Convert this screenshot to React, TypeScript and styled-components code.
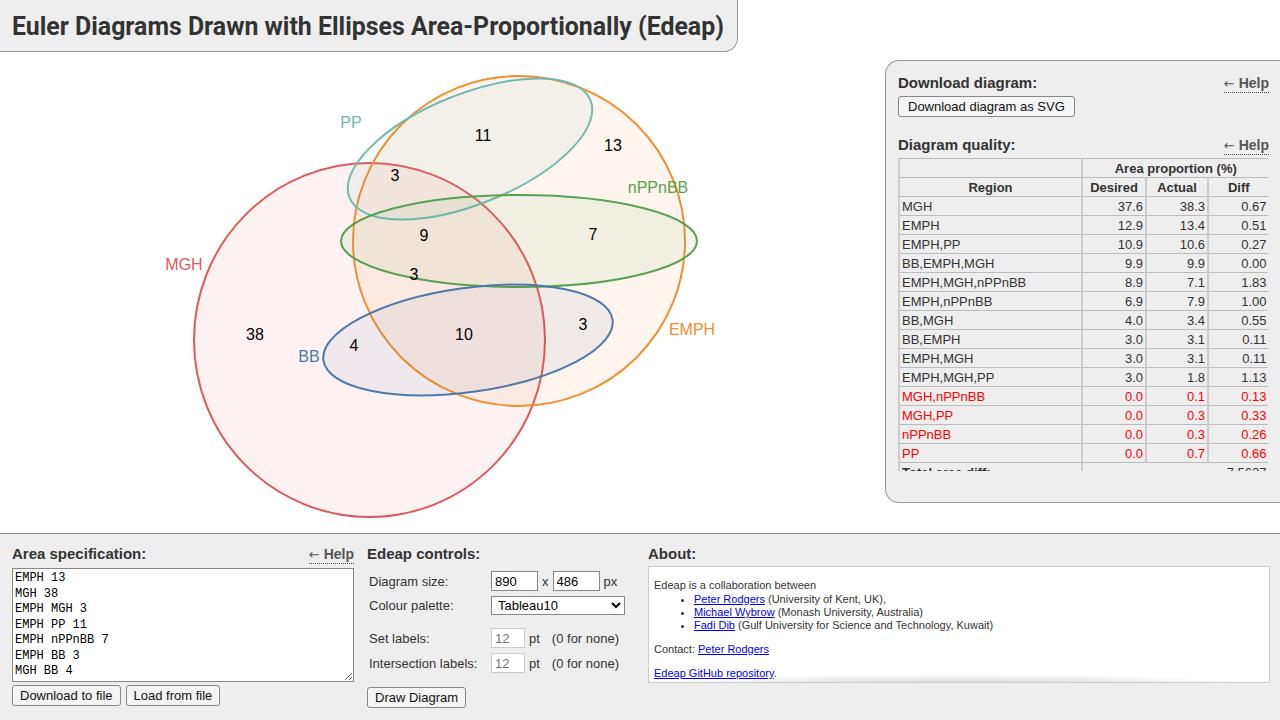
import React, { FC } from 'react';
import styled, { createGlobalStyle } from 'styled-components';

const GlobalStyle = createGlobalStyle`
    html, body {
        margin: 0;
        padding: 0;
        background: #fff;
        font-family: "Liberation Sans", Arial, sans-serif;
        color: #222;
    }
`;

const Page = styled.div`
    width: 1280px;
    height: 720px;
    overflow: hidden;
    display: flex;
    flex-direction: column;
`;

const Top = styled.div`
    height: 533px;
    display: grid;
    grid-template-columns: 885px 1fr;
`;

const LeftCol = styled.div`
    display: flex;
    flex-direction: column;
`;

const TitleTab = styled.div`
    align-self: flex-start;
    height: 52px;
    box-sizing: border-box;
    padding: 0 13px 0 12px;
    display: flex;
    align-items: center;
    background: #eee;
    border-right: 1px solid #999;
    border-bottom: 1px solid #999;
    border-bottom-right-radius: 14px;
`;

const Title = styled.h1`
    margin: 0;
    padding-top: 2px;
    font-family: Roboto, "Liberation Sans", sans-serif;
    font-size: 24.9px;
    font-weight: 700;
    color: #333;
`;

const RightCol = styled.div`
    padding-top: 60px;
`;

const SidePanel = styled.div`
    height: 443px;
    box-sizing: border-box;
    background: #eee;
    border: 1px solid #999;
    border-right: none;
    border-radius: 14px 0 0 14px;
    padding: 13px 12px 0 12px;
    width: 396px;
`;

const SectionHead = styled.div<{ $gap?: number }>`
    display: flex;
    justify-content: space-between;
    align-items: baseline;
    margin-top: ${(p) => p.$gap ?? 0}px;
    margin-bottom: 3px;
`;

const Heading = styled.span`
    font-size: 15px;
    font-weight: 700;
    color: #333;
`;

const Help = styled.a`
    font-size: 14px;
    font-weight: 700;
    color: #555;
    text-decoration: none;
    border-bottom: 1px dotted #444;
    line-height: 16px;
`;

const Arrow = styled.span`
    font-family: "DejaVu Sans", sans-serif;
    font-weight: 400;
    font-size: 13px;
`;

const Button = styled.button<{ $pad?: number }>`
    font-family: "Liberation Sans", Arial, sans-serif;
    font-size: 13px;
    color: #111;
    background: #f4f4f4;
    border: 1px solid #888;
    border-radius: 3px;
    height: 21px;
    padding: 0 ${(p) => p.$pad ?? 7}px;
`;

const TableWrap = styled.div`
    height: 313px;
    overflow: hidden;
    width: 370px;
`;

const Table = styled.table`
    border-collapse: collapse;
    table-layout: fixed;
    width: 370px;
    font-size: 13px;
    color: #333;
`;

const Th = styled.th`
    font-weight: 700;
    height: 18px;
    padding: 0 2px;
    border: 1px solid #bbb;
    border-left-width: 2px;
    border-left-color: #ccc;
    text-align: center;
    line-height: 17px;
`;

const Td = styled.td<{ $num?: boolean; $red?: boolean }>`
    height: 18px;
    padding: 0 2px;
    line-height: 17px;
    border: 1px solid #bbb;
    border-left-width: 2px;
    border-left-color: #ccc;
    text-align: ${(p) => (p.$num ? 'right' : 'left')};
    color: ${(p) => (p.$red ? '#f00' : '#333')};
    white-space: nowrap;
`;

const Bottom = styled.div`
    flex: 1;
    background: #eee;
    border-top: 1px solid #888;
    display: grid;
    grid-template-columns: 342px 268px 622px;
    column-gap: 13px;
    padding: 11px 0 0 12px;
`;

const Column = styled.div`
    display: flex;
    flex-direction: column;
`;

const SpecArea = styled.textarea`
    box-sizing: border-box;
    width: 342px;
    height: 114px;
    margin: 1px 0 0 0;
    padding: 2px 2px 0 2px;
    font-family: "Liberation Mono", "Courier New", monospace;
    font-size: 12px;
    font-weight: 400;
    line-height: 15.5px;
    color: #000;
    border: 1px solid #888;
    resize: vertical;
    overflow: hidden;
`;

const ButtonRow = styled.div`
    display: flex;
    gap: 5px;
    margin-top: 3px;
`;

const ControlGrid = styled.div`
    display: grid;
    grid-template-columns: 122px auto;
    row-gap: 5px;
    align-items: center;
    font-size: 13px;
    color: #333;
    padding-left: 2px;
    margin-top: 6px;
`;

const Spacer = styled.div`
    grid-column: span 2;
    height: 3px;
`;

const Inline = styled.div`
    display: flex;
    align-items: center;
    gap: 4px;
`;

const NumInput = styled.input<{ $w: number; $muted?: boolean }>`
    box-sizing: border-box;
    width: ${(p) => p.$w}px;
    height: 20px;
    font-family: "Liberation Sans", Arial, sans-serif;
    font-size: 13px;
    padding: 0 3px;
    color: ${(p) => (p.$muted ? '#999' : '#000')};
    border: 1px solid ${(p) => (p.$muted ? '#ccc' : '#888')};
    background: #fff;
`;

const Note = styled.span`
    margin-left: 8px;
`;

const Select = styled.select`
    width: 134px;
    height: 19px;
    font-family: "Liberation Sans", Arial, sans-serif;
    font-size: 13px;
    border: 1px solid #888;
    background: #fff;
    color: #000;
    padding: 0 2px;
`;

const DrawRow = styled.div`
    margin-top: 14px;
`;

const AboutBox = styled.div`
    box-sizing: border-box;
    height: 117px;
    width: 622px;
    margin-top: 1px;
    background: #fff;
    border: 1px solid #ccc;
    padding: 12px 5px 0 5px;
    font-size: 11px;
    line-height: 13px;
    color: #333;
    overflow: hidden;
    position: relative;
    &::after {
        content: '';
        position: absolute;
        left: 20px;
        right: 20px;
        bottom: -12px;
        height: 20px;
        background: radial-gradient(ellipse at center, rgba(0, 0, 0, 0.18), rgba(0, 0, 0, 0) 70%);
    }
`;

const Para = styled.p<{ $after?: number }>`
    margin: 0 0 ${(p) => p.$after ?? 0}px 0;
`;

const List = styled.ul`
    margin: 1px 0 11px 0;
    padding-left: 40px;
`;

const Link = styled.a`
    color: #00e;
    text-decoration: underline;
`;

type Row = [string, string, string, string, boolean?];

const rows: Row[] = [
    ['MGH', '37.6', '38.3', '0.67'],
    ['EMPH', '12.9', '13.4', '0.51'],
    ['EMPH,PP', '10.9', '10.6', '0.27'],
    ['BB,EMPH,MGH', '9.9', '9.9', '0.00'],
    ['EMPH,MGH,nPPnBB', '8.9', '7.1', '1.83'],
    ['EMPH,nPPnBB', '6.9', '7.9', '1.00'],
    ['BB,MGH', '4.0', '3.4', '0.55'],
    ['BB,EMPH', '3.0', '3.1', '0.11'],
    ['EMPH,MGH', '3.0', '3.1', '0.11'],
    ['EMPH,MGH,PP', '3.0', '1.8', '1.13'],
    ['MGH,nPPnBB', '0.0', '0.1', '0.13', true],
    ['MGH,PP', '0.0', '0.3', '0.33', true],
    ['nPPnBB', '0.0', '0.3', '0.26', true],
    ['PP', '0.0', '0.7', '0.66', true],
];

type Shape = { name: string; color: string; cx: number; cy: number; rx: number; ry: number; rot: number };

const shapes: Shape[] = [
    { name: 'MGH', color: '#e15759', cx: 369.5, cy: 340, rx: 175.5, ry: 177, rot: 0 },
    { name: 'EMPH', color: '#f28e2b', cx: 519, cy: 241, rx: 166, ry: 165, rot: 0 },
    { name: 'PP', color: '#76b7b2', cx: 470, cy: 149, rx: 130, ry: 55, rot: -22 },
    { name: 'nPPnBB', color: '#59a14f', cx: 519, cy: 241, rx: 178, ry: 46, rot: 0 },
    { name: 'BB', color: '#4e79a7', cx: 468, cy: 340, rx: 146, ry: 52, rot: -8 },
];

const setLabels = [
    { t: 'PP', x: 351, y: 128, c: '#76b7b2' },
    { t: 'MGH', x: 184, y: 270, c: '#e15759' },
    { t: 'nPPnBB', x: 658, y: 193, c: '#59a14f' },
    { t: 'EMPH', x: 692, y: 335, c: '#f28e2b' },
    { t: 'BB', x: 309, y: 362, c: '#4e79a7' },
];

const zoneLabels = [
    { t: '11', x: 483, y: 141 },
    { t: '13', x: 613, y: 151 },
    { t: '3', x: 395, y: 181 },
    { t: '9', x: 424, y: 241 },
    { t: '7', x: 593, y: 240 },
    { t: '3', x: 414, y: 280 },
    { t: '38', x: 255, y: 340 },
    { t: '4', x: 354, y: 351 },
    { t: '10', x: 464, y: 340 },
    { t: '3', x: 583, y: 330 },
];

const Diagram: FC = () => (
    <svg width={885} height={481} viewBox="0 52 885 481">
        {shapes.map((s) => (
            <ellipse
                key={s.name}
                cx={s.cx}
                cy={s.cy}
                rx={s.rx}
                ry={s.ry}
                transform={`rotate(${s.rot} ${s.cx} ${s.cy})`}
                fill={s.color}
                fillOpacity={0.08}
                stroke={s.color}
                strokeWidth={2}
            />
        ))}
        {setLabels.map((l) => (
            <text key={l.t} x={l.x} y={l.y} fill={l.c} fontSize={16} textAnchor="middle" fontFamily="Liberation Sans, Arial, sans-serif">
                {l.t}
            </text>
        ))}
        {zoneLabels.map((l, i) => (
            <text key={i} x={l.x} y={l.y} fill="#000" fontSize={16} textAnchor="middle" fontFamily="Liberation Sans, Arial, sans-serif">
                {l.t}
            </text>
        ))}
    </svg>
);

const spec = [
    'EMPH 13',
    'MGH 38',
    'EMPH MGH 3',
    'EMPH PP 11',
    'EMPH nPPnBB 7',
    'EMPH BB 3',
    'MGH BB 4',
    'EMPH MGH BB 10',
    'EMPH MGH nPPnBB 9',
    'EMPH MGH PP 3',
].join('\n');

const HelpLink: FC = () => (
    <Help>
        <Arrow>←</Arrow> Help
    </Help>
);

const App: FC = () => (
    <Page>
        <GlobalStyle />
        <Top>
            <LeftCol>
                <TitleTab>
                    <Title>Euler Diagrams Drawn with Ellipses Area-Proportionally (Edeap)</Title>
                </TitleTab>
                <Diagram />
            </LeftCol>
            <RightCol>
                <SidePanel>
                    <SectionHead>
                        <Heading>Download diagram:</Heading>
                        <HelpLink />
                    </SectionHead>
                    <Button $pad={9}>Download diagram as SVG</Button>
                    <SectionHead $gap={19}>
                        <Heading>Diagram quality:</Heading>
                        <HelpLink />
                    </SectionHead>
                    <TableWrap>
                        <Table>
                            <colgroup>
                                <col style={{ width: 183 }} />
                                <col style={{ width: 64 }} />
                                <col style={{ width: 62 }} />
                                <col style={{ width: 61 }} />
                            </colgroup>
                            <thead>
                                <tr>
                                    <Th />
                                    <Th colSpan={3}>Area proportion (%)</Th>
                                </tr>
                                <tr>
                                    <Th>Region</Th>
                                    <Th>Desired</Th>
                                    <Th>Actual</Th>
                                    <Th>Diff</Th>
                                </tr>
                            </thead>
                            <tbody>
                                {rows.map(([r, d, a, f, red]) => (
                                    <tr key={r}>
                                        <Td $red={red}>{r}</Td>
                                        <Td $num $red={red}>{d}</Td>
                                        <Td $num $red={red}>{a}</Td>
                                        <Td $num $red={red}>{f}</Td>
                                    </tr>
                                ))}
                                <tr>
                                    <Td>
                                        <b>Total area diff:</b>
                                    </Td>
                                    <Td $num colSpan={3}>
                                        7.5637
                                    </Td>
                                </tr>
                            </tbody>
                        </Table>
                    </TableWrap>
                </SidePanel>
            </RightCol>
        </Top>
        <Bottom>
            <Column>
                <SectionHead>
                    <Heading>Area specification:</Heading>
                    <HelpLink />
                </SectionHead>
                <SpecArea defaultValue={spec} spellCheck={false} />
                <ButtonRow>
                    <Button>Download to file</Button>
                    <Button>Load from file</Button>
                </ButtonRow>
            </Column>
            <Column>
                <SectionHead>
                    <Heading>Edeap controls:</Heading>
                </SectionHead>
                <ControlGrid>
                    <span>Diagram size:</span>
                    <Inline>
                        <NumInput $w={47} defaultValue="890" />
                        <span>x</span>
                        <NumInput $w={47} defaultValue="486" />
                        <span>px</span>
                    </Inline>
                    <span>Colour palette:</span>
                    <Select defaultValue="Tableau10">
                        <option>Tableau10</option>
                        <option>Tableau20</option>
                    </Select>
                    <Spacer />
                    <span>Set labels:</span>
                    <Inline>
                        <NumInput $w={34} $muted placeholder="12" />
                        <span>pt</span>
                        <Note>(0 for none)</Note>
                    </Inline>
                    <span>Intersection labels:</span>
                    <Inline>
                        <NumInput $w={34} $muted placeholder="12" />
                        <span>pt</span>
                        <Note>(0 for none)</Note>
                    </Inline>
                </ControlGrid>
                <DrawRow>
                    <Button>Draw Diagram</Button>
                </DrawRow>
            </Column>
            <Column>
                <SectionHead>
                    <Heading>About:</Heading>
                </SectionHead>
                <AboutBox>
                    <Para>Edeap is a collaboration between</Para>
                    <List>
                        <li>
                            <Link href="#">Peter Rodgers</Link> (University of Kent, UK),
                        </li>
                        <li>
                            <Link href="#">Michael Wybrow</Link> (Monash University, Australia)
                        </li>
                        <li>
                            <Link href="#">Fadi Dib</Link> (Gulf University for Science and Technology, Kuwait)
                        </li>
                    </List>
                    <Para $after={11}>
                        Contact: <Link href="#">Peter Rodgers</Link>
                    </Para>
                    <Para>
                        <Link href="#">Edeap GitHub repository</Link>.
                    </Para>
                </AboutBox>
            </Column>
        </Bottom>
    </Page>
);

export default App;
